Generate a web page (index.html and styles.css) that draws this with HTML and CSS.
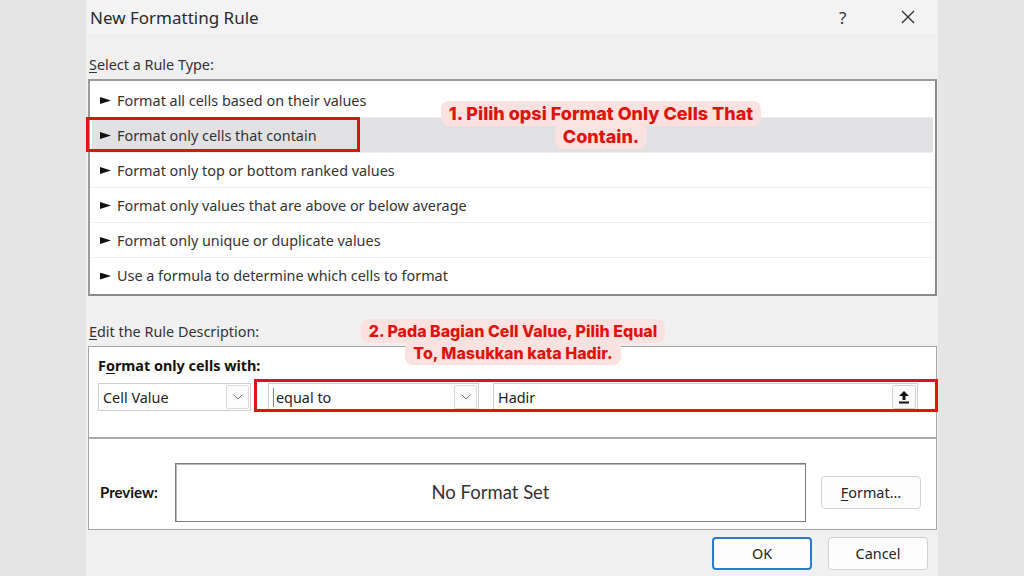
FILE: index.html
```html
<!DOCTYPE html>
<html lang="en">
<head>
    <meta charset="UTF-8">
    <title>New Formatting Rule</title>
    <link rel="stylesheet" href="styles.css">
</head>
<body>
    <div class="dialog">
        <div class="title-bar">
            <span class="title">New Formatting Rule</span>
            <span class="title-help">?</span>
            <span class="title-close">
                <svg width="16" height="16" viewBox="0 0 16 16"><path d="M2 2 L14 14 M14 2 L2 14" stroke="#333" stroke-width="1.4" fill="none"/></svg>
            </span>
        </div>

        <div class="section-label"><u>S</u>elect a Rule Type:</div>
        <div class="rule-list">
            <div class="rule-item"><span class="arrow"></span>Format all cells based on their values</div>
            <div class="rule-item selected"><span class="arrow"></span>Format only cells that contain</div>
            <div class="rule-item"><span class="arrow"></span>Format only top or bottom ranked values</div>
            <div class="rule-item"><span class="arrow"></span>Format only values that are above or below average</div>
            <div class="rule-item"><span class="arrow"></span>Format only unique or duplicate values</div>
            <div class="rule-item"><span class="arrow"></span>Use a formula to determine which cells to format</div>
        </div>

        <div class="section-label desc-label"><u>E</u>dit the Rule Description:</div>
        <div class="desc-box">
            <div class="desc-top">
                <div class="desc-heading">F<u>o</u>rmat only cells with:</div>
                <div class="controls">
                    <div class="combo combo-first">
                        <span class="combo-text">Cell Value</span>
                        <span class="combo-btn"><svg width="10" height="6" viewBox="0 0 10 6"><path d="M1 1 L5 5 L9 1" stroke="#777" fill="none"/></svg></span>
                    </div>
                    <div class="combo combo-second">
                        <span class="combo-text caret">equal to</span>
                        <span class="combo-btn"><svg width="10" height="6" viewBox="0 0 10 6"><path d="M1 1 L5 5 L9 1" stroke="#777" fill="none"/></svg></span>
                    </div>
                    <div class="text-input">
                        <span class="combo-text">Hadir</span>
                        <span class="ref-btn">
                            <svg width="12" height="14" viewBox="0 0 12 14"><path d="M6 1 L11 6 L7.5 6 L7.5 10 L4.5 10 L4.5 6 L1 6 Z" fill="#111"/><rect x="1" y="11.5" width="10" height="2" fill="#111"/></svg>
                        </span>
                    </div>
                </div>
            </div>
            <div class="preview-row">
                <span class="preview-label">Preview:</span>
                <div class="preview-box">No Format Set</div>
                <button class="btn format-btn"><u>F</u>ormat...</button>
            </div>
        </div>

        <div class="footer">
            <button class="btn ok-btn">OK</button>
            <button class="btn">Cancel</button>
        </div>

        <div class="highlight highlight-rule"></div>
        <div class="highlight highlight-controls"></div>

        <div class="note note-one"><span>1. Pilih opsi Format Only Cells That Contain.</span></div>
        <div class="note note-two"><span>2. Pada Bagian Cell Value, Pilih Equal To, Masukkan kata Hadir.</span></div>
    </div>
</body>
</html>
```

FILE: styles.css
```css
* {
    margin: 0;
    padding: 0;
    box-sizing: border-box;
}

body {
    background: #e5e5e5;
    height: 576px;
    overflow: hidden;
    font-family: 'Noto Sans', 'Open Sans', sans-serif;
    font-size: 14.4px;
    color: #222;
}

u {
    text-decoration-thickness: 1px;
    text-underline-offset: 2px;
}

.dialog {
    position: relative;
    width: 852px;
    height: 576px;
    margin-left: 86px;
    background: #f0f0f0;
}

.title-bar {
    display: flex;
    align-items: center;
    height: 34px;
    padding-left: 4px;
    background: #f3f3f3;
}

.title {
    flex: 1;
    font-size: 17px;
    color: #2a2a2a;
}

.title-help {
    width: 61px;
    font-size: 17px;
    color: #333;
}

.title-close {
    display: flex;
    width: 21px;
    margin-right: 17px;
}

.section-label {
    padding: 20px 0 0 3px;
    height: 45px;
    line-height: 22px;
    color: #333;
}

.rule-list {
    width: 849px;
    margin-left: 2px;
    padding: 2px 2px 1px;
    background: #fff;
    border: 2px solid #8a8a8a;
    border-left-color: #9a9a9a;
    border-top-color: #9a9a9a;
}

.rule-item {
    display: flex;
    align-items: center;
    height: 35px;
    padding-left: 8px;
    border-bottom: 1px solid #eeeeee;
    color: #333;
}

.rule-item:last-child {
    border-bottom: none;
}

.rule-item.selected {
    background: #e1e1e4;
}

/* the little pointer in front of each rule */
.arrow {
    width: 11px;
    height: 7px;
    margin: 1px 6px 0 0;
    background: #111;
    clip-path: polygon(0 0, 100% 50%, 0 100%, 0 65%, 0 35%);
}

.desc-label {
    padding-top: 25px;
    height: 50px;
}

.desc-box {
    width: 849px;
    margin-left: 2px;
    height: 184px;
    background: #fff;
    border: 1px solid #a5a5a5;
}

.desc-top {
    height: 92px;
    padding: 9px 0 0 9px;
    border-bottom: 2px solid #a8a8a8;
}

.desc-heading {
    font-weight: bold;
    color: #111;
    height: 27px;
}

.controls {
    display: flex;
    gap: 16px;
}

.combo,
.text-input {
    display: flex;
    align-items: center;
    justify-content: space-between;
    height: 28px;
    border: 1px solid #cfcfcf;
    padding: 0 1px 0 4px;
}

.combo-first {
    width: 153px;
}

.combo-second {
    width: 211px;
    margin-left: 1px;
}

.text-input {
    width: 425px;
    margin-left: -2px;
}

.combo-text {
    color: #222;
}

.caret {
    border-left: 1px solid #5b8fdc;
    padding-left: 2px;
}

.combo-btn,
.ref-btn {
    display: flex;
    align-items: center;
    justify-content: center;
    width: 23px;
    height: 24px;
    border: 1px solid #dcdcdc;
    border-radius: 2px;
    background: #fbfbfb;
}

.ref-btn {
    width: 24px;
    border-color: #d4d4d4;
}

.preview-row {
    display: flex;
    align-items: center;
    height: 90px;
    padding: 16px 0 0 11px;
}

.preview-label {
    font-family: 'Lato', sans-serif;
    font-weight: bold;
    font-size: 15px;
    color: #111;
    width: 75px;
}

.preview-box {
    display: flex;
    align-items: center;
    justify-content: center;
    width: 631px;
    height: 59px;
    border: 1px solid #7c7c7c;
    box-shadow: inset 1px 1px 0 #b8b8b8;
    font-family: 'Lato', sans-serif;
    font-size: 18.5px;
    color: #333;
}

.btn {
    width: 100px;
    height: 33px;
    border: 1px solid #d2d2d2;
    border-radius: 4px;
    background: #fdfdfd;
    font-family: 'Noto Sans', 'Open Sans', sans-serif;
    font-size: 14.4px;
    color: #222;
}

.format-btn {
    margin-left: 15px;
    width: 100px;
    height: 33px;
}

.footer {
    display: flex;
    justify-content: flex-end;
    gap: 16px;
    padding: 7px 10px 0 0;
}

.ok-btn {
    border: 2px solid #2a7bd0;
}

.highlight {
    position: absolute;
    border: 3px solid #e0140f;
}

.highlight-rule {
    left: 0;
    top: 117px;
    width: 274px;
    height: 35px;
}

.highlight-controls {
    left: 168px;
    top: 379px;
    width: 684px;
    height: 33px;
}

.note {
    position: absolute;
    text-align: center;
    font-family: 'Inter', 'Noto Sans', sans-serif;
    font-weight: 800;
    color: #e0120c;
}

.note span {
    background: #fbe1e0;
    padding: 2px 8px;
    border-radius: 8px;
    -webkit-box-decoration-break: clone;
    box-decoration-break: clone;
}

.note-one {
    left: 335px;
    top: 102px;
    width: 360px;
    font-size: 18px;
    line-height: 23px;
}

.note-two {
    left: 266px;
    top: 320px;
    width: 322px;
    font-size: 16px;
    line-height: 22px;
}
```
